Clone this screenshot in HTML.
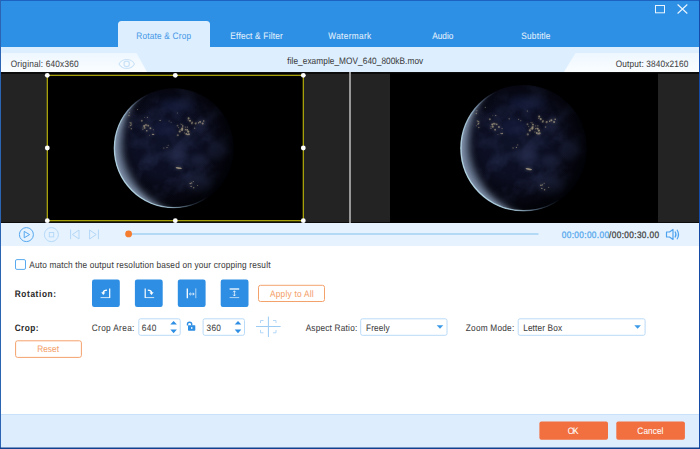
<!DOCTYPE html>
<html lang="en">
<head>
<meta charset="utf-8">
<title>Rotate &amp; Crop</title>
<style>
*{box-sizing:border-box;margin:0;padding:0}
html,body{width:700px;height:449px;overflow:hidden;background:#fff}
body{font-family:"Liberation Sans",sans-serif;position:relative}
#win{position:absolute;left:0;top:0;width:700px;height:449px;overflow:hidden;background:#fff}
.a{position:absolute}
svg{position:absolute;overflow:visible}
</style>
</head>
<body>
<div id="win">

<div class="a" style="left:0;top:0;width:700px;height:47px;background:#2d90e5"></div>
<div class="a" style="left:0;top:47px;width:700px;height:25px;background:#ddefff"></div>
<div class="a" style="left:118px;top:21px;width:92px;height:30px;background:#ddefff;border-radius:3.5px 3.5px 0 0"></div>
<svg width="700" height="449" style="left:0;top:0">
<defs>
<linearGradient id="lg1" x1="0" y1="0" x2="0" y2="1"><stop offset="0" stop-color="#eef7ff"/><stop offset="1" stop-color="#fafdff"/></linearGradient>
</defs>
<polygon points="0,53 136.5,53 147,72 0,72" fill="url(#lg1)"/>
<polygon points="700,53 575.5,53 564,72 700,72" fill="url(#lg1)"/>
</svg>








<svg width="700" height="449" style="left:0;top:0" fill="none">
<rect x="655.5" y="5.5" width="9" height="7.3" stroke="#eaf4fe" stroke-width="1"/>
<path d="M677.6 4.5 L687.3 13.5 M687.3 4.5 L677.6 13.5" stroke="#eaf4fe" stroke-width="1.15"/>
<path d="M119 63.9 C122.2 58 131.2 58 134.5 63.9 C131.2 69.8 122.2 69.8 119 63.9 Z" stroke="#cbe2f7" stroke-width="1.1" stroke-linejoin="round"/>
<circle cx="126.7" cy="63.9" r="2.7" stroke="#cbe2f7" stroke-width="1.2"/>
</svg>
<div class="a" style="left:0;top:72px;width:700px;height:150.5px;background:#232323;border-top:2px solid #0c0c0c;border-bottom:1px solid #0c0c0c"></div>
<div class="a" style="left:47px;top:73px;width:257px;height:149px;background:#000"></div>
<div class="a" style="left:390px;top:73px;width:268.3px;height:149.5px;background:#000"></div>
<div class="a" style="left:349px;top:72px;width:2px;height:150.5px;background:#979797"></div>

<svg width="700" height="449" style="left:0;top:0">
<defs>
<radialGradient id="eb" gradientUnits="userSpaceOnUse" cx="-8" cy="-6" r="68">
 <stop offset="0" stop-color="#10142a"/><stop offset="0.45" stop-color="#0d1024"/><stop offset="0.75" stop-color="#090a18"/><stop offset="1" stop-color="#040509"/>
</radialGradient>
<linearGradient id="sg" gradientUnits="userSpaceOnUse" x1="-52" y1="30" x2="8" y2="-4.6">
 <stop offset="0" stop-color="#b4d6e4" stop-opacity="0.95"/><stop offset="0.4" stop-color="#a8cbdc" stop-opacity="0.8"/><stop offset="0.7" stop-color="#8fb0d0" stop-opacity="0.25"/><stop offset="0.95" stop-color="#8fb0d0" stop-opacity="0"/>
</linearGradient>
<radialGradient id="cg" gradientUnits="userSpaceOnUse" cx="0" cy="0" r="60">
 <stop offset="0.70" stop-color="#1f2636"/><stop offset="0.80" stop-color="#3b4558"/><stop offset="0.90" stop-color="#5e6c83"/><stop offset="0.97" stop-color="#7d8da5"/><stop offset="1" stop-color="#8c9db4"/>
</radialGradient>
<filter id="b1" color-interpolation-filters="sRGB" x="-20%" y="-20%" width="140%" height="140%"><feGaussianBlur stdDeviation="3.6"/></filter>
<filter id="b2" color-interpolation-filters="sRGB" x="-20%" y="-20%" width="140%" height="140%"><feGaussianBlur stdDeviation="0.45"/></filter>
<filter id="b3" color-interpolation-filters="sRGB" x="-50%" y="-50%" width="200%" height="200%"><feGaussianBlur stdDeviation="2.4"/></filter>
<filter id="b4" color-interpolation-filters="sRGB" x="-50%" y="-50%" width="200%" height="200%"><feGaussianBlur stdDeviation="0.75"/></filter>
<filter id="tx" filterUnits="userSpaceOnUse" x="-62" y="-62" width="124" height="124" color-interpolation-filters="sRGB">
 <feTurbulence type="fractalNoise" baseFrequency="0.05" numOctaves="4" seed="11" result="n"/>
 <feColorMatrix in="n" type="matrix" values="0 0 0 0 0.17  0 0 0 0 0.2  0 0 0 0 0.34  2.6 0 0 0 -1.05"/>
 <feGaussianBlur stdDeviation="0.7"/>
</filter>
<radialGradient id="vg" gradientUnits="userSpaceOnUse" cx="-6" cy="-4" r="66">
 <stop offset="0.55" stop-color="#04050c" stop-opacity="0"/><stop offset="0.85" stop-color="#04050c" stop-opacity="0.55"/><stop offset="1" stop-color="#020308" stop-opacity="0.95"/>
</radialGradient>
<mask id="bm" maskUnits="userSpaceOnUse" x="-62" y="-62" width="124" height="124"><circle cx="29" cy="-9" r="79.2" fill="#fff" filter="url(#b1)"/></mask>
<filter id="b5" color-interpolation-filters="sRGB" x="-50%" y="-50%" width="200%" height="200%"><feGaussianBlur stdDeviation="1.6"/></filter>
<clipPath id="ec"><circle cx="0" cy="0" r="60"/></clipPath>
</defs>
<g transform="translate(173.7 148.3)">
 <g clip-path="url(#ec)" style="isolation:isolate" opacity="0.996">
  <rect x="-62" y="-62" width="124" height="124" fill="url(#cg)"/>
  <g mask="url(#bm)">
  <rect x="-62" y="-62" width="124" height="124" fill="url(#eb)"/>
  <g filter="url(#b3)" fill="#262d4c" opacity="0.55">
   <ellipse cx="44" cy="2" rx="10" ry="10"/>
   <ellipse cx="26" cy="12" rx="10" ry="6"/>
   <ellipse cx="2" cy="6" rx="12" ry="7"/>
   <ellipse cx="27" cy="36" rx="13" ry="9"/>
   <ellipse cx="4" cy="-44" rx="18" ry="7" fill="#1a2248"/>
   <ellipse cx="-10" cy="-20" rx="12" ry="8" fill="#171e42"/>
  </g>
  <rect x="-62" y="-62" width="124" height="124" filter="url(#tx)" opacity="0.5"/>
  <rect x="-62" y="-62" width="124" height="124" fill="url(#vg)"/>
  </g>
  <circle cx="0" cy="0" r="59.35" fill="none" stroke="url(#sg)" stroke-width="1.5" filter="url(#b2)"/>
  <g filter="url(#b4)" fill="#d8c8a0" opacity="0.6"><circle cx="-43.3" cy="-22.7" r="0.74" opacity="0.58"/><circle cx="-43.9" cy="-26.0" r="0.48" opacity="0.78"/><circle cx="-42.0" cy="-23.9" r="0.48" opacity="0.59"/><circle cx="-44.7" cy="-21.2" r="0.51" opacity="0.65"/><circle cx="-44.7" cy="-32.8" r="0.71" opacity="0.73"/><circle cx="-42.7" cy="-25.2" r="0.84" opacity="0.68"/><circle cx="-42.7" cy="-23.2" r="0.59" opacity="0.92"/><circle cx="-42.4" cy="-19.6" r="0.74" opacity="0.72"/><circle cx="-43.3" cy="-25.5" r="0.48" opacity="0.64"/><circle cx="-28.2" cy="-23.5" r="0.65" opacity="0.81"/><circle cx="-29.1" cy="-20.4" r="0.97" opacity="0.86"/><circle cx="-26.9" cy="-17.6" r="0.79" opacity="0.94"/><circle cx="-27.3" cy="-23.1" r="1.09" opacity="0.60"/><circle cx="-30.8" cy="-18.8" r="0.55" opacity="0.77"/><circle cx="-23.3" cy="-20.1" r="0.95" opacity="0.81"/><circle cx="-25.4" cy="-22.6" r="0.90" opacity="0.82"/><circle cx="-29.5" cy="-22.4" r="1.00" opacity="0.98"/><circle cx="-30.8" cy="-20.4" r="0.49" opacity="0.87"/><circle cx="-31.9" cy="-27.5" r="0.98" opacity="0.68"/><circle cx="-24.2" cy="-13.0" r="0.46" opacity="0.76"/><circle cx="-21.5" cy="-14.1" r="0.47" opacity="0.90"/><circle cx="-21.0" cy="-13.9" r="0.59" opacity="0.94"/><circle cx="-20.1" cy="-13.9" r="0.64" opacity="0.95"/><circle cx="-20.3" cy="-18.6" r="0.55" opacity="0.74"/><circle cx="4.1" cy="-13.1" r="1.07" opacity="0.62"/><circle cx="11.5" cy="-18.4" r="0.60" opacity="0.77"/><circle cx="7.0" cy="-24.3" r="0.45" opacity="0.74"/><circle cx="6.0" cy="-16.8" r="1.07" opacity="0.86"/><circle cx="3.8" cy="-22.7" r="0.89" opacity="0.57"/><circle cx="16.3" cy="-27.6" r="1.02" opacity="0.91"/><circle cx="6.5" cy="-18.5" r="0.52" opacity="0.84"/><circle cx="11.6" cy="-21.2" r="0.59" opacity="0.62"/><circle cx="9.2" cy="-20.5" r="0.45" opacity="0.62"/><circle cx="13.4" cy="-18.9" r="0.47" opacity="0.94"/><circle cx="8.1" cy="-24.0" r="0.61" opacity="0.71"/><circle cx="8.5" cy="-19.9" r="1.00" opacity="1.00"/><circle cx="4.9" cy="-20.7" r="0.51" opacity="0.60"/><circle cx="8.1" cy="-18.4" r="0.99" opacity="0.62"/><circle cx="20.9" cy="-20.0" r="0.79" opacity="0.62"/><circle cx="9.0" cy="-22.3" r="0.79" opacity="0.99"/><circle cx="14.5" cy="-28.4" r="0.62" opacity="0.72"/><circle cx="13.9" cy="-13.8" r="0.80" opacity="0.90"/><circle cx="8.5" cy="-18.6" r="0.98" opacity="0.99"/><circle cx="14.9" cy="-30.0" r="0.98" opacity="0.88"/><circle cx="10.8" cy="-15.4" r="0.68" opacity="0.56"/><circle cx="13.6" cy="-21.2" r="0.62" opacity="0.86"/><circle cx="14.6" cy="-16.7" r="1.06" opacity="0.99"/><circle cx="14.3" cy="-16.7" r="0.59" opacity="0.65"/><circle cx="12.6" cy="-14.4" r="0.86" opacity="0.96"/><circle cx="13.5" cy="-18.4" r="0.87" opacity="0.91"/><circle cx="15.2" cy="-14.1" r="1.04" opacity="0.90"/><circle cx="12.0" cy="-18.9" r="0.57" opacity="0.91"/><circle cx="21.9" cy="-24.7" r="0.98" opacity="0.73"/><circle cx="18.1" cy="-24.9" r="0.85" opacity="0.63"/><circle cx="26.4" cy="-26.4" r="0.95" opacity="0.91"/><circle cx="29.0" cy="-24.8" r="0.99" opacity="0.85"/><circle cx="22.4" cy="-25.5" r="0.52" opacity="0.56"/><circle cx="30.0" cy="-27.4" r="0.74" opacity="0.97"/><circle cx="18.5" cy="-25.8" r="0.90" opacity="0.64"/><circle cx="25.0" cy="-25.8" r="0.58" opacity="0.81"/><circle cx="24.8" cy="-25.4" r="0.52" opacity="0.96"/><circle cx="-6.7" cy="-0.8" r="0.60" opacity="0.96"/><circle cx="-9.9" cy="-0.3" r="0.58" opacity="0.79"/><circle cx="-5.5" cy="-3.1" r="0.56" opacity="0.63"/><circle cx="23.9" cy="37.1" r="0.51" opacity="0.76"/><circle cx="19.6" cy="33.2" r="0.56" opacity="0.78"/><circle cx="16.4" cy="35.2" r="0.49" opacity="0.80"/><circle cx="20.0" cy="39.4" r="0.72" opacity="0.78"/><circle cx="16.6" cy="35.1" r="0.77" opacity="0.75"/><circle cx="18.0" cy="34.7" r="0.63" opacity="0.86"/><circle cx="17.4" cy="38.1" r="0.62" opacity="0.97"/><circle cx="-36.2" cy="-38.8" r="0.59" opacity="0.67"/><circle cx="-44.2" cy="-35.6" r="0.58" opacity="0.61"/><circle cx="-29.1" cy="-30.8" r="0.46" opacity="0.66"/><circle cx="-26.3" cy="-31.0" r="0.57" opacity="0.95"/><circle cx="-2.6" cy="-26.1" r="0.55" opacity="0.61"/><circle cx="3.6" cy="-35.3" r="0.48" opacity="0.98"/><circle cx="-13.6" cy="-27.9" r="0.60" opacity="0.92"/><circle cx="-4.6" cy="-27.3" r="0.53" opacity="0.70"/><ellipse cx="5" cy="19.8" rx="3.2" ry="0.8" transform="rotate(10 5 19.8)"/></g>
  <g filter="url(#b5)" fill="#d8c8a0" opacity="0.34"><circle cx="-43.3" cy="-22.7" r="0.74" opacity="0.58"/><circle cx="-43.9" cy="-26.0" r="0.48" opacity="0.78"/><circle cx="-42.0" cy="-23.9" r="0.48" opacity="0.59"/><circle cx="-44.7" cy="-21.2" r="0.51" opacity="0.65"/><circle cx="-44.7" cy="-32.8" r="0.71" opacity="0.73"/><circle cx="-42.7" cy="-25.2" r="0.84" opacity="0.68"/><circle cx="-42.7" cy="-23.2" r="0.59" opacity="0.92"/><circle cx="-42.4" cy="-19.6" r="0.74" opacity="0.72"/><circle cx="-43.3" cy="-25.5" r="0.48" opacity="0.64"/><circle cx="-28.2" cy="-23.5" r="0.65" opacity="0.81"/><circle cx="-29.1" cy="-20.4" r="0.97" opacity="0.86"/><circle cx="-26.9" cy="-17.6" r="0.79" opacity="0.94"/><circle cx="-27.3" cy="-23.1" r="1.09" opacity="0.60"/><circle cx="-30.8" cy="-18.8" r="0.55" opacity="0.77"/><circle cx="-23.3" cy="-20.1" r="0.95" opacity="0.81"/><circle cx="-25.4" cy="-22.6" r="0.90" opacity="0.82"/><circle cx="-29.5" cy="-22.4" r="1.00" opacity="0.98"/><circle cx="-30.8" cy="-20.4" r="0.49" opacity="0.87"/><circle cx="-31.9" cy="-27.5" r="0.98" opacity="0.68"/><circle cx="-24.2" cy="-13.0" r="0.46" opacity="0.76"/><circle cx="-21.5" cy="-14.1" r="0.47" opacity="0.90"/><circle cx="-21.0" cy="-13.9" r="0.59" opacity="0.94"/><circle cx="-20.1" cy="-13.9" r="0.64" opacity="0.95"/><circle cx="-20.3" cy="-18.6" r="0.55" opacity="0.74"/><circle cx="4.1" cy="-13.1" r="1.07" opacity="0.62"/><circle cx="11.5" cy="-18.4" r="0.60" opacity="0.77"/><circle cx="7.0" cy="-24.3" r="0.45" opacity="0.74"/><circle cx="6.0" cy="-16.8" r="1.07" opacity="0.86"/><circle cx="3.8" cy="-22.7" r="0.89" opacity="0.57"/><circle cx="16.3" cy="-27.6" r="1.02" opacity="0.91"/><circle cx="6.5" cy="-18.5" r="0.52" opacity="0.84"/><circle cx="11.6" cy="-21.2" r="0.59" opacity="0.62"/><circle cx="9.2" cy="-20.5" r="0.45" opacity="0.62"/><circle cx="13.4" cy="-18.9" r="0.47" opacity="0.94"/><circle cx="8.1" cy="-24.0" r="0.61" opacity="0.71"/><circle cx="8.5" cy="-19.9" r="1.00" opacity="1.00"/><circle cx="4.9" cy="-20.7" r="0.51" opacity="0.60"/><circle cx="8.1" cy="-18.4" r="0.99" opacity="0.62"/><circle cx="20.9" cy="-20.0" r="0.79" opacity="0.62"/><circle cx="9.0" cy="-22.3" r="0.79" opacity="0.99"/><circle cx="14.5" cy="-28.4" r="0.62" opacity="0.72"/><circle cx="13.9" cy="-13.8" r="0.80" opacity="0.90"/><circle cx="8.5" cy="-18.6" r="0.98" opacity="0.99"/><circle cx="14.9" cy="-30.0" r="0.98" opacity="0.88"/><circle cx="10.8" cy="-15.4" r="0.68" opacity="0.56"/><circle cx="13.6" cy="-21.2" r="0.62" opacity="0.86"/><circle cx="14.6" cy="-16.7" r="1.06" opacity="0.99"/><circle cx="14.3" cy="-16.7" r="0.59" opacity="0.65"/><circle cx="12.6" cy="-14.4" r="0.86" opacity="0.96"/><circle cx="13.5" cy="-18.4" r="0.87" opacity="0.91"/><circle cx="15.2" cy="-14.1" r="1.04" opacity="0.90"/><circle cx="12.0" cy="-18.9" r="0.57" opacity="0.91"/><circle cx="21.9" cy="-24.7" r="0.98" opacity="0.73"/><circle cx="18.1" cy="-24.9" r="0.85" opacity="0.63"/><circle cx="26.4" cy="-26.4" r="0.95" opacity="0.91"/><circle cx="29.0" cy="-24.8" r="0.99" opacity="0.85"/><circle cx="22.4" cy="-25.5" r="0.52" opacity="0.56"/><circle cx="30.0" cy="-27.4" r="0.74" opacity="0.97"/><circle cx="18.5" cy="-25.8" r="0.90" opacity="0.64"/><circle cx="25.0" cy="-25.8" r="0.58" opacity="0.81"/><circle cx="24.8" cy="-25.4" r="0.52" opacity="0.96"/><circle cx="-6.7" cy="-0.8" r="0.60" opacity="0.96"/><circle cx="-9.9" cy="-0.3" r="0.58" opacity="0.79"/><circle cx="-5.5" cy="-3.1" r="0.56" opacity="0.63"/><circle cx="23.9" cy="37.1" r="0.51" opacity="0.76"/><circle cx="19.6" cy="33.2" r="0.56" opacity="0.78"/><circle cx="16.4" cy="35.2" r="0.49" opacity="0.80"/><circle cx="20.0" cy="39.4" r="0.72" opacity="0.78"/><circle cx="16.6" cy="35.1" r="0.77" opacity="0.75"/><circle cx="18.0" cy="34.7" r="0.63" opacity="0.86"/><circle cx="17.4" cy="38.1" r="0.62" opacity="0.97"/><circle cx="-36.2" cy="-38.8" r="0.59" opacity="0.67"/><circle cx="-44.2" cy="-35.6" r="0.58" opacity="0.61"/><circle cx="-29.1" cy="-30.8" r="0.46" opacity="0.66"/><circle cx="-26.3" cy="-31.0" r="0.57" opacity="0.95"/><circle cx="-2.6" cy="-26.1" r="0.55" opacity="0.61"/><circle cx="3.6" cy="-35.3" r="0.48" opacity="0.98"/><circle cx="-13.6" cy="-27.9" r="0.60" opacity="0.92"/><circle cx="-4.6" cy="-27.3" r="0.53" opacity="0.70"/><ellipse cx="5" cy="19.8" rx="3.2" ry="0.8" transform="rotate(10 5 19.8)"/></g>
 </g>
</g>
<g transform="translate(523.5 148.2) scale(1.055)">
 <g clip-path="url(#ec)" style="isolation:isolate" opacity="0.996">
  <rect x="-62" y="-62" width="124" height="124" fill="url(#cg)"/>
  <g mask="url(#bm)">
  <rect x="-62" y="-62" width="124" height="124" fill="url(#eb)"/>
  <g filter="url(#b3)" fill="#262d4c" opacity="0.55">
   <ellipse cx="44" cy="2" rx="10" ry="10"/>
   <ellipse cx="26" cy="12" rx="10" ry="6"/>
   <ellipse cx="2" cy="6" rx="12" ry="7"/>
   <ellipse cx="27" cy="36" rx="13" ry="9"/>
   <ellipse cx="4" cy="-44" rx="18" ry="7" fill="#1a2248"/>
   <ellipse cx="-10" cy="-20" rx="12" ry="8" fill="#171e42"/>
  </g>
  <rect x="-62" y="-62" width="124" height="124" filter="url(#tx)" opacity="0.5"/>
  <rect x="-62" y="-62" width="124" height="124" fill="url(#vg)"/>
  </g>
  <circle cx="0" cy="0" r="59.35" fill="none" stroke="url(#sg)" stroke-width="1.5" filter="url(#b2)"/>
  <g filter="url(#b4)" fill="#d8c8a0" opacity="0.6"><circle cx="-43.3" cy="-22.7" r="0.74" opacity="0.58"/><circle cx="-43.9" cy="-26.0" r="0.48" opacity="0.78"/><circle cx="-42.0" cy="-23.9" r="0.48" opacity="0.59"/><circle cx="-44.7" cy="-21.2" r="0.51" opacity="0.65"/><circle cx="-44.7" cy="-32.8" r="0.71" opacity="0.73"/><circle cx="-42.7" cy="-25.2" r="0.84" opacity="0.68"/><circle cx="-42.7" cy="-23.2" r="0.59" opacity="0.92"/><circle cx="-42.4" cy="-19.6" r="0.74" opacity="0.72"/><circle cx="-43.3" cy="-25.5" r="0.48" opacity="0.64"/><circle cx="-28.2" cy="-23.5" r="0.65" opacity="0.81"/><circle cx="-29.1" cy="-20.4" r="0.97" opacity="0.86"/><circle cx="-26.9" cy="-17.6" r="0.79" opacity="0.94"/><circle cx="-27.3" cy="-23.1" r="1.09" opacity="0.60"/><circle cx="-30.8" cy="-18.8" r="0.55" opacity="0.77"/><circle cx="-23.3" cy="-20.1" r="0.95" opacity="0.81"/><circle cx="-25.4" cy="-22.6" r="0.90" opacity="0.82"/><circle cx="-29.5" cy="-22.4" r="1.00" opacity="0.98"/><circle cx="-30.8" cy="-20.4" r="0.49" opacity="0.87"/><circle cx="-31.9" cy="-27.5" r="0.98" opacity="0.68"/><circle cx="-24.2" cy="-13.0" r="0.46" opacity="0.76"/><circle cx="-21.5" cy="-14.1" r="0.47" opacity="0.90"/><circle cx="-21.0" cy="-13.9" r="0.59" opacity="0.94"/><circle cx="-20.1" cy="-13.9" r="0.64" opacity="0.95"/><circle cx="-20.3" cy="-18.6" r="0.55" opacity="0.74"/><circle cx="4.1" cy="-13.1" r="1.07" opacity="0.62"/><circle cx="11.5" cy="-18.4" r="0.60" opacity="0.77"/><circle cx="7.0" cy="-24.3" r="0.45" opacity="0.74"/><circle cx="6.0" cy="-16.8" r="1.07" opacity="0.86"/><circle cx="3.8" cy="-22.7" r="0.89" opacity="0.57"/><circle cx="16.3" cy="-27.6" r="1.02" opacity="0.91"/><circle cx="6.5" cy="-18.5" r="0.52" opacity="0.84"/><circle cx="11.6" cy="-21.2" r="0.59" opacity="0.62"/><circle cx="9.2" cy="-20.5" r="0.45" opacity="0.62"/><circle cx="13.4" cy="-18.9" r="0.47" opacity="0.94"/><circle cx="8.1" cy="-24.0" r="0.61" opacity="0.71"/><circle cx="8.5" cy="-19.9" r="1.00" opacity="1.00"/><circle cx="4.9" cy="-20.7" r="0.51" opacity="0.60"/><circle cx="8.1" cy="-18.4" r="0.99" opacity="0.62"/><circle cx="20.9" cy="-20.0" r="0.79" opacity="0.62"/><circle cx="9.0" cy="-22.3" r="0.79" opacity="0.99"/><circle cx="14.5" cy="-28.4" r="0.62" opacity="0.72"/><circle cx="13.9" cy="-13.8" r="0.80" opacity="0.90"/><circle cx="8.5" cy="-18.6" r="0.98" opacity="0.99"/><circle cx="14.9" cy="-30.0" r="0.98" opacity="0.88"/><circle cx="10.8" cy="-15.4" r="0.68" opacity="0.56"/><circle cx="13.6" cy="-21.2" r="0.62" opacity="0.86"/><circle cx="14.6" cy="-16.7" r="1.06" opacity="0.99"/><circle cx="14.3" cy="-16.7" r="0.59" opacity="0.65"/><circle cx="12.6" cy="-14.4" r="0.86" opacity="0.96"/><circle cx="13.5" cy="-18.4" r="0.87" opacity="0.91"/><circle cx="15.2" cy="-14.1" r="1.04" opacity="0.90"/><circle cx="12.0" cy="-18.9" r="0.57" opacity="0.91"/><circle cx="21.9" cy="-24.7" r="0.98" opacity="0.73"/><circle cx="18.1" cy="-24.9" r="0.85" opacity="0.63"/><circle cx="26.4" cy="-26.4" r="0.95" opacity="0.91"/><circle cx="29.0" cy="-24.8" r="0.99" opacity="0.85"/><circle cx="22.4" cy="-25.5" r="0.52" opacity="0.56"/><circle cx="30.0" cy="-27.4" r="0.74" opacity="0.97"/><circle cx="18.5" cy="-25.8" r="0.90" opacity="0.64"/><circle cx="25.0" cy="-25.8" r="0.58" opacity="0.81"/><circle cx="24.8" cy="-25.4" r="0.52" opacity="0.96"/><circle cx="-6.7" cy="-0.8" r="0.60" opacity="0.96"/><circle cx="-9.9" cy="-0.3" r="0.58" opacity="0.79"/><circle cx="-5.5" cy="-3.1" r="0.56" opacity="0.63"/><circle cx="23.9" cy="37.1" r="0.51" opacity="0.76"/><circle cx="19.6" cy="33.2" r="0.56" opacity="0.78"/><circle cx="16.4" cy="35.2" r="0.49" opacity="0.80"/><circle cx="20.0" cy="39.4" r="0.72" opacity="0.78"/><circle cx="16.6" cy="35.1" r="0.77" opacity="0.75"/><circle cx="18.0" cy="34.7" r="0.63" opacity="0.86"/><circle cx="17.4" cy="38.1" r="0.62" opacity="0.97"/><circle cx="-36.2" cy="-38.8" r="0.59" opacity="0.67"/><circle cx="-44.2" cy="-35.6" r="0.58" opacity="0.61"/><circle cx="-29.1" cy="-30.8" r="0.46" opacity="0.66"/><circle cx="-26.3" cy="-31.0" r="0.57" opacity="0.95"/><circle cx="-2.6" cy="-26.1" r="0.55" opacity="0.61"/><circle cx="3.6" cy="-35.3" r="0.48" opacity="0.98"/><circle cx="-13.6" cy="-27.9" r="0.60" opacity="0.92"/><circle cx="-4.6" cy="-27.3" r="0.53" opacity="0.70"/><ellipse cx="5" cy="19.8" rx="3.2" ry="0.8" transform="rotate(10 5 19.8)"/></g>
  <g filter="url(#b5)" fill="#d8c8a0" opacity="0.34"><circle cx="-43.3" cy="-22.7" r="0.74" opacity="0.58"/><circle cx="-43.9" cy="-26.0" r="0.48" opacity="0.78"/><circle cx="-42.0" cy="-23.9" r="0.48" opacity="0.59"/><circle cx="-44.7" cy="-21.2" r="0.51" opacity="0.65"/><circle cx="-44.7" cy="-32.8" r="0.71" opacity="0.73"/><circle cx="-42.7" cy="-25.2" r="0.84" opacity="0.68"/><circle cx="-42.7" cy="-23.2" r="0.59" opacity="0.92"/><circle cx="-42.4" cy="-19.6" r="0.74" opacity="0.72"/><circle cx="-43.3" cy="-25.5" r="0.48" opacity="0.64"/><circle cx="-28.2" cy="-23.5" r="0.65" opacity="0.81"/><circle cx="-29.1" cy="-20.4" r="0.97" opacity="0.86"/><circle cx="-26.9" cy="-17.6" r="0.79" opacity="0.94"/><circle cx="-27.3" cy="-23.1" r="1.09" opacity="0.60"/><circle cx="-30.8" cy="-18.8" r="0.55" opacity="0.77"/><circle cx="-23.3" cy="-20.1" r="0.95" opacity="0.81"/><circle cx="-25.4" cy="-22.6" r="0.90" opacity="0.82"/><circle cx="-29.5" cy="-22.4" r="1.00" opacity="0.98"/><circle cx="-30.8" cy="-20.4" r="0.49" opacity="0.87"/><circle cx="-31.9" cy="-27.5" r="0.98" opacity="0.68"/><circle cx="-24.2" cy="-13.0" r="0.46" opacity="0.76"/><circle cx="-21.5" cy="-14.1" r="0.47" opacity="0.90"/><circle cx="-21.0" cy="-13.9" r="0.59" opacity="0.94"/><circle cx="-20.1" cy="-13.9" r="0.64" opacity="0.95"/><circle cx="-20.3" cy="-18.6" r="0.55" opacity="0.74"/><circle cx="4.1" cy="-13.1" r="1.07" opacity="0.62"/><circle cx="11.5" cy="-18.4" r="0.60" opacity="0.77"/><circle cx="7.0" cy="-24.3" r="0.45" opacity="0.74"/><circle cx="6.0" cy="-16.8" r="1.07" opacity="0.86"/><circle cx="3.8" cy="-22.7" r="0.89" opacity="0.57"/><circle cx="16.3" cy="-27.6" r="1.02" opacity="0.91"/><circle cx="6.5" cy="-18.5" r="0.52" opacity="0.84"/><circle cx="11.6" cy="-21.2" r="0.59" opacity="0.62"/><circle cx="9.2" cy="-20.5" r="0.45" opacity="0.62"/><circle cx="13.4" cy="-18.9" r="0.47" opacity="0.94"/><circle cx="8.1" cy="-24.0" r="0.61" opacity="0.71"/><circle cx="8.5" cy="-19.9" r="1.00" opacity="1.00"/><circle cx="4.9" cy="-20.7" r="0.51" opacity="0.60"/><circle cx="8.1" cy="-18.4" r="0.99" opacity="0.62"/><circle cx="20.9" cy="-20.0" r="0.79" opacity="0.62"/><circle cx="9.0" cy="-22.3" r="0.79" opacity="0.99"/><circle cx="14.5" cy="-28.4" r="0.62" opacity="0.72"/><circle cx="13.9" cy="-13.8" r="0.80" opacity="0.90"/><circle cx="8.5" cy="-18.6" r="0.98" opacity="0.99"/><circle cx="14.9" cy="-30.0" r="0.98" opacity="0.88"/><circle cx="10.8" cy="-15.4" r="0.68" opacity="0.56"/><circle cx="13.6" cy="-21.2" r="0.62" opacity="0.86"/><circle cx="14.6" cy="-16.7" r="1.06" opacity="0.99"/><circle cx="14.3" cy="-16.7" r="0.59" opacity="0.65"/><circle cx="12.6" cy="-14.4" r="0.86" opacity="0.96"/><circle cx="13.5" cy="-18.4" r="0.87" opacity="0.91"/><circle cx="15.2" cy="-14.1" r="1.04" opacity="0.90"/><circle cx="12.0" cy="-18.9" r="0.57" opacity="0.91"/><circle cx="21.9" cy="-24.7" r="0.98" opacity="0.73"/><circle cx="18.1" cy="-24.9" r="0.85" opacity="0.63"/><circle cx="26.4" cy="-26.4" r="0.95" opacity="0.91"/><circle cx="29.0" cy="-24.8" r="0.99" opacity="0.85"/><circle cx="22.4" cy="-25.5" r="0.52" opacity="0.56"/><circle cx="30.0" cy="-27.4" r="0.74" opacity="0.97"/><circle cx="18.5" cy="-25.8" r="0.90" opacity="0.64"/><circle cx="25.0" cy="-25.8" r="0.58" opacity="0.81"/><circle cx="24.8" cy="-25.4" r="0.52" opacity="0.96"/><circle cx="-6.7" cy="-0.8" r="0.60" opacity="0.96"/><circle cx="-9.9" cy="-0.3" r="0.58" opacity="0.79"/><circle cx="-5.5" cy="-3.1" r="0.56" opacity="0.63"/><circle cx="23.9" cy="37.1" r="0.51" opacity="0.76"/><circle cx="19.6" cy="33.2" r="0.56" opacity="0.78"/><circle cx="16.4" cy="35.2" r="0.49" opacity="0.80"/><circle cx="20.0" cy="39.4" r="0.72" opacity="0.78"/><circle cx="16.6" cy="35.1" r="0.77" opacity="0.75"/><circle cx="18.0" cy="34.7" r="0.63" opacity="0.86"/><circle cx="17.4" cy="38.1" r="0.62" opacity="0.97"/><circle cx="-36.2" cy="-38.8" r="0.59" opacity="0.67"/><circle cx="-44.2" cy="-35.6" r="0.58" opacity="0.61"/><circle cx="-29.1" cy="-30.8" r="0.46" opacity="0.66"/><circle cx="-26.3" cy="-31.0" r="0.57" opacity="0.95"/><circle cx="-2.6" cy="-26.1" r="0.55" opacity="0.61"/><circle cx="3.6" cy="-35.3" r="0.48" opacity="0.98"/><circle cx="-13.6" cy="-27.9" r="0.60" opacity="0.92"/><circle cx="-4.6" cy="-27.3" r="0.53" opacity="0.70"/><ellipse cx="5" cy="19.8" rx="3.2" ry="0.8" transform="rotate(10 5 19.8)"/></g>
 </g>
</g>
</svg>
<svg width="700" height="449" style="left:0;top:0">
<rect x="47.3" y="75.3" width="256" height="145.4" fill="none" stroke="#bdb60c" stroke-width="1.15"/>
<g fill="#fff">
<circle cx="47.3" cy="75.3" r="2.4"/><circle cx="175.3" cy="75.3" r="2.4"/><circle cx="303.3" cy="75.3" r="2.4"/>
<circle cx="47.3" cy="148" r="2.4"/><circle cx="303.3" cy="148" r="2.4"/>
<circle cx="47.3" cy="220.7" r="2.4"/><circle cx="175.3" cy="220.7" r="2.4"/><circle cx="303.3" cy="220.7" r="2.4"/>
</g>
</svg>
<div class="a" style="left:0;top:222.5px;width:700px;height:23.6px;background:#e6f3ff"></div>
<svg width="700" height="449" style="left:0;top:0" fill="none">
<circle cx="26.4" cy="234.6" r="7" stroke="#55a7ee" stroke-width="1"/>
<path d="M24.2 231.4 L29.6 234.6 L24.2 237.8 Z" stroke="#55a7ee" stroke-width="1" stroke-linejoin="round"/>
<circle cx="51.4" cy="234.6" r="7" stroke="#b6d9f8" stroke-width="1"/>
<rect x="49.3" y="232.5" width="4.4" height="4.4" stroke="#b6d9f8" stroke-width="1"/>
<path d="M70.6 229.6 V239.2 M79 230 L72.4 234.5 L79 239 Z" stroke="#b3d7f7" stroke-width="1" stroke-linejoin="round"/>
<path d="M98.4 229.6 V239.2 M89.6 230 L96.2 234.5 L89.6 239 Z" stroke="#b3d7f7" stroke-width="1" stroke-linejoin="round"/>
<path d="M128 234 H538.5" stroke="#a3d1f4" stroke-width="1.5"/>
<circle cx="128.6" cy="233.9" r="3.4" fill="#f47d30"/>
<g stroke="#4ea3ee" stroke-width="1.2" stroke-linejoin="round">
<path d="M666.5 232 H669.5 L673 229.5 V239.5 L669.5 237 H666.5 Z"/>
<path d="M675 231.5 Q677 234.5 675 237.5"/>
<path d="M677 229.8 Q680 234.5 677 239.2"/>
</g>
</svg>


<svg width="700" height="449" style="left:0;top:0"><rect x="15.5" y="259.6" width="10" height="9.8" rx="1.4" fill="#fff" stroke="#5aaaf0" stroke-width="1"/></svg>


<svg width="700" height="449" style="left:0;top:0" fill="#2d8ee3"><rect x="92" y="279.5" width="27.8" height="27.5" rx="2.2"/><rect x="134.9" y="279.5" width="27.8" height="27.5" rx="2.2"/><rect x="177.8" y="279.5" width="27.8" height="27.5" rx="2.2"/><rect x="220.7" y="279.5" width="27.8" height="27.5" rx="2.2"/></svg>
<svg width="700" height="449" style="left:0;top:0" fill="none" stroke="#fff" stroke-width="1">
<!-- rotate left -->
<path d="M109.7 288.4 V298" stroke-width="1.2"/>
<path d="M100.5 297.6 H109.7" stroke-width="0.9" opacity="0.85"/>
<path d="M107 290.2 Q103.6 290.2 103 293" stroke-width="1.3"/>
<path d="M101.2 292.2 L103.2 295 L105.4 292.4 Z" fill="#fff" stroke="none"/>
<!-- rotate right -->
<path d="M145.2 288.4 V298" stroke-width="1.2"/>
<path d="M145.2 297.6 H154.2" stroke-width="0.9" opacity="0.85"/>
<path d="M147.8 290.2 Q151.2 290.2 151.8 293" stroke-width="1.3"/>
<path d="M149.4 292.4 L151.6 295 L153.6 292.2 Z" fill="#fff" stroke="none"/>
<!-- flip horizontal -->
<path d="M187.3 288.4 V298.2" stroke-width="1.3"/>
<path d="M195.8 288.4 V298.2" stroke-width="0.9" opacity="0.7"/>
<path d="M189.4 294 H194.2 M190.8 292.7 L189.4 294 L190.8 295.3 M192.8 292.7 L194.2 294 L192.8 295.3" stroke-width="0.8" opacity="0.9"/>
<!-- flip vertical -->
<path d="M229.6 289 H239.2" stroke-width="1.3"/>
<path d="M229.6 297.6 H239.2" stroke-width="0.9" opacity="0.7"/>
<path d="M234.4 290.8 V296 M233.1 292.2 L234.4 290.8 L235.7 292.2 M233.1 294.6 L234.4 296 L235.7 294.6" stroke-width="0.8" opacity="0.9"/>
</svg>
<svg width="700" height="449" style="left:0;top:0"><rect x="258.5" y="285.3" width="66" height="16.2" rx="2" fill="#fff" stroke="#f4a26c" stroke-width="1"/></svg>



<svg width="700" height="449" style="left:0;top:0"><rect x="138.8" y="318.8" width="41.4" height="16.5" rx="1.8" fill="#fff" stroke="#b9daf8" stroke-width="1"/></svg>
<svg width="700" height="449" style="left:0;top:0"><rect x="203.1" y="318.8" width="41.4" height="16.5" rx="1.8" fill="#fff" stroke="#b9daf8" stroke-width="1"/></svg>



<svg width="700" height="449" style="left:0;top:0"><rect x="360.7" y="318.8" width="86.3" height="16.5" rx="1.8" fill="#fff" stroke="#b9daf8" stroke-width="1"/></svg>


<svg width="700" height="449" style="left:0;top:0"><rect x="518.2" y="318.8" width="126.9" height="16.5" rx="1.8" fill="#fff" stroke="#b9daf8" stroke-width="1"/></svg>

<svg width="700" height="449" style="left:0;top:0">
<g fill="#2d8ee3">
<path d="M170.3 324.6 L173.6 321 L176.9 324.6 Z"/>
<path d="M170.3 329.6 L173.6 333.2 L176.9 329.6 Z"/>
<path d="M234.7 324.6 L238 321 L241.3 324.6 Z"/>
<path d="M234.7 329.6 L238 333.2 L241.3 329.6 Z"/>
<path d="M436.7 325.2 H443.3 L440 328.8 Z" fill="#3b9ae8"/>
<path d="M634.3 325.2 H640.9 L637.6 328.8 Z" fill="#3b9ae8"/>
<rect x="188" y="325.2" width="7.3" height="5.5" rx="0.6"/>
</g>
<path d="M187.5 325.6 V324.2 Q187.5 322.2 189.6 322.2 Q191.7 322.2 191.7 324.2 V325.4" fill="none" stroke="#2d8ee3" stroke-width="1.4"/>
<rect x="191" y="327.2" width="1.4" height="1.6" fill="#fff"/>
<g fill="none" stroke="#9ccbf4" stroke-width="1">
<path d="M256 326.5 H280.6 M268.4 316.6 V337"/>
<path d="M260.5 323 V320.5 H263.5 M273 320.5 H276 V323 M260.5 330 V332.8 H263.5 M273 332.8 H276 V330" stroke="#b5d8f7"/>
</g>
</svg>
<svg width="700" height="449" style="left:0;top:0"><rect x="15.6" y="340.8" width="65.8" height="16.6" rx="2" fill="#fff" stroke="#f4a26c" stroke-width="1"/></svg>

<div class="a" style="left:0;top:413.6px;width:700px;height:35.4px;background:#ddedfe;border-top:1px solid #c9e2fa"></div>
<svg width="700" height="449" style="left:0;top:0" fill="#f26f3f"><rect x="539.4" y="421.4" width="68.6" height="18.3" rx="2"/><rect x="616.3" y="421.4" width="68.6" height="18.3" rx="2"/></svg>


<svg id="txt" width="700" height="449" style="left:0;top:0" font-family="Liberation Sans, sans-serif" font-size="9.4" stroke-width="0.06" text-rendering="geometricPrecision"><text transform="translate(136.30 39.10) scale(0.88 1)" x="0" y="0" textLength="62.22" lengthAdjust="spacing" fill="#4a9ae8" stroke="#4a9ae8">Rotate &amp; Crop</text>
<text transform="translate(230.30 39.10) scale(0.88 1)" x="0" y="0" textLength="59.72" lengthAdjust="spacing" fill="#e3f0fd" stroke="#e3f0fd">Effect &amp; Filter</text>
<text transform="translate(328.35 39.10) scale(0.88 1)" x="0" y="0" textLength="48.69" lengthAdjust="spacing" fill="#e3f0fd" stroke="#e3f0fd">Watermark</text>
<text transform="translate(432.20 39.10) scale(0.88 1)" x="0" y="0" textLength="24.15" lengthAdjust="spacing" fill="#e3f0fd" stroke="#e3f0fd">Audio</text>
<text transform="translate(521.35 39.10) scale(0.88 1)" x="0" y="0" textLength="33.01" lengthAdjust="spacing" fill="#e3f0fd" stroke="#e3f0fd">Subtitle</text>
<text transform="translate(10.75 66.90) scale(0.88 1)" x="0" y="0" textLength="77.10" lengthAdjust="spacing" fill="#424242" stroke="#424242">Original: 640x360</text>
<text transform="translate(615.75 66.90) scale(0.88 1)" x="0" y="0" textLength="82.39" lengthAdjust="spacing" fill="#424242" stroke="#424242">Output: 3840x2160</text>
<text transform="translate(287.30 63.70) scale(0.88 1)" x="0" y="0" textLength="154.43" lengthAdjust="spacing" fill="#3e3e3e" stroke="#3e3e3e">file_example_MOV_640_800kB.mov</text>
<text transform="translate(561.75 238.00) scale(0.88 1)" x="0" y="0" textLength="53.75" lengthAdjust="spacing" fill="#57a8ec" stroke="#57a8ec" stroke-width="0.3">00:00:00.00</text>
<text transform="translate(609.05 238.00) scale(0.88 1)" x="0" y="0" textLength="56.82" lengthAdjust="spacing" fill="#444444" stroke="#444444" stroke-width="0.3">/00:00:30.00</text>
<text transform="translate(29.20 268.00) scale(0.88 1)" x="0" y="0" textLength="274.15" lengthAdjust="spacing" fill="#3e3e3e" stroke="#3e3e3e">Auto match the output resolution based on your cropping result</text>
<text transform="translate(14.70 296.80) scale(0.88 1)" x="0" y="0" textLength="46.99" lengthAdjust="spacing" fill="#2a2a2a" stroke="#2a2a2a" font-weight="bold">Rotation:</text>
<text transform="translate(270.00 297.10) scale(0.88 1)" x="0" y="0" textLength="49.60" lengthAdjust="spacing" fill="#f5a26b" stroke="#f5a26b">Apply to All</text>
<text transform="translate(14.70 330.50) scale(0.88 1)" x="0" y="0" textLength="26.93" lengthAdjust="spacing" fill="#2a2a2a" stroke="#2a2a2a" font-weight="bold">Crop:</text>
<text transform="translate(91.75 330.50) scale(0.88 1)" x="0" y="0" textLength="48.47" lengthAdjust="spacing" fill="#3e3e3e" stroke="#3e3e3e">Crop Area:</text>
<text transform="translate(141.85 330.50) scale(0.88 1)" x="0" y="0" textLength="16.53" lengthAdjust="spacing" fill="#3e3e3e" stroke="#3e3e3e">640</text>
<text transform="translate(206.55 330.50) scale(0.88 1)" x="0" y="0" textLength="16.36" lengthAdjust="spacing" fill="#3e3e3e" stroke="#3e3e3e">360</text>
<text transform="translate(305.65 330.50) scale(0.88 1)" x="0" y="0" textLength="58.64" lengthAdjust="spacing" fill="#3e3e3e" stroke="#3e3e3e">Aspect Ratio:</text>
<text transform="translate(365.95 330.50) scale(0.88 1)" x="0" y="0" textLength="26.93" lengthAdjust="spacing" fill="#3e3e3e" stroke="#3e3e3e">Freely</text>
<text transform="translate(465.80 330.50) scale(0.88 1)" x="0" y="0" textLength="55.06" lengthAdjust="spacing" fill="#3e3e3e" stroke="#3e3e3e">Zoom Mode:</text>
<text transform="translate(523.15 330.50) scale(0.88 1)" x="0" y="0" textLength="44.32" lengthAdjust="spacing" fill="#3e3e3e" stroke="#3e3e3e">Letter Box</text>
<text transform="translate(37.15 352.30) scale(0.88 1)" x="0" y="0" textLength="24.77" lengthAdjust="spacing" fill="#f5a26b" stroke="#f5a26b">Reset</text>
<text transform="translate(567.75 434.10) scale(0.88 1)" x="0" y="0" textLength="12.22" lengthAdjust="spacing" fill="#fff" stroke="#fff">OK</text>
<text transform="translate(637.35 434.10) scale(0.88 1)" x="0" y="0" textLength="29.66" lengthAdjust="spacing" fill="#fff" stroke="#fff">Cancel</text></svg>
<div class="a" style="left:0;top:0;width:700px;height:1px;background:#1c62be"></div>
<div class="a" style="left:0;top:0;width:1px;height:449px;background:#2a64b2"></div>
<div class="a" style="left:699px;top:0;width:1px;height:449px;background:#154aa6"></div>
<svg width="700" height="449" style="left:0;top:0"><rect x="0" y="447.5" width="700" height="1.5" fill="#12408e"/></svg>
</div>
</body>
</html>
